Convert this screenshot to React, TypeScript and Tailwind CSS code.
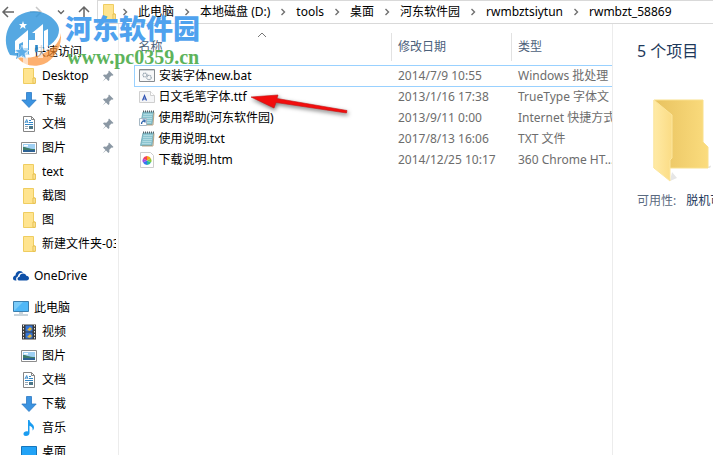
import { ReactNode } from "react";

type IconProps = { className?: string };

function FolderIcon({ className = "" }: IconProps) {
  return (
    <svg viewBox="0 0 14 16" className={"h-4 w-3.5 shrink-0 " + className} aria-hidden="true">
      <path d="M1.500.5h10v9.500h1.500v5.500h-11.500z" fill="#ffe48f" stroke="#efcd60" />
      <path d="M11 10h2.300v5.300H11z" fill="#ffe9a3" stroke="#e6bf4d" />
    </svg>
  );
}

function DownloadIcon() {
  return (
    <svg viewBox="0 0 16 16" className="size-4 shrink-0" aria-hidden="true">
      <path d="M5.500.5h5v7.500h4.700L8 15.500.8 8h4.700z" fill="#3b93e0" stroke="#2c78c4" strokeWidth=".8" />
    </svg>
  );
}

function DocumentIcon() {
  return (
    <svg viewBox="0 0 16 16" className="size-4 shrink-0" aria-hidden="true">
      <path d="M2.500.5h8l3 3v12h-11z" fill="#fff" stroke="#858585" />
      <path d="M10.500.5v3h3" fill="none" stroke="#858585" />
      <path d="M8 4.500h2M8 6.500h4M4 8.500h8" stroke="#3186c6" />
      <path d="M4 10.500h3M4 12.500h3" stroke="#9aa7b2" />
      <path d="M8 10h4v3H8z" fill="#4b7586" />
      <path d="M4 7l1.700-3.500L7 7M4.500 6h2" fill="none" stroke="#3186c6" strokeWidth=".9" />
    </svg>
  );
}

function PictureIcon() {
  return (
    <svg viewBox="0 0 16 12" className="h-3 w-4 shrink-0" aria-hidden="true">
      <path d="M.5.5h15v11H.5z" fill="#fff" stroke="#8d8d8d" />
      <path d="M2 2h12v5H2z" fill="#9fd0f3" />
      <path d="M2 5c4 0 5 2 12 2v2H2z" fill="#3f7d6a" />
      <path d="M2 8h12v2H2z" fill="#2d6294" />
      <path d="M3 3h4v1.500H3z" fill="#fff" />
    </svg>
  );
}

function VideoIcon() {
  return (
    <svg viewBox="0 0 14 16" className="h-4 w-3.5 shrink-0" aria-hidden="true">
      <path d="M0 .5h14v15H0z" fill="#3a3a3a" />
      <path d="M1.500 1v14M12.500 1v14" stroke="#e8e8e8" strokeDasharray="1.500 1.500" />
      <path d="M3.500 1.500h7v6h-7zM3.500 8.500h7v6h-7z" fill="#3374d6" />
      <path d="M5 6l3-3 2 2-2 2zM5 13l3-3 2 2-2 2z" fill="#e0b33d" />
    </svg>
  );
}

function MusicIcon() {
  return (
    <svg viewBox="0 0 16 16" className="size-4 shrink-0" aria-hidden="true">
      <path d="M7 0h1.500c.5 3.500 4.500 4 4.500 7.500 0 1.500-.8 2.500-1.500 3 .6-2.500-.7-4-3-4.700V13c0 1.800-1.700 3-3.500 3S2.500 15 2.500 13.700C2.500 12 4.800 10.800 7 11.500z" fill="#1a9cf0" />
    </svg>
  );
}

function PcIcon() {
  return (
    <svg viewBox="0 0 16 16" className="size-4 shrink-0" aria-hidden="true">
      <path d="M.5 1.500h15v10H.5z" fill="#4fb7f7" stroke="#3c7fae" />
      <path d="M1 11l9-9H1z" fill="#7accfa" />
      <path d="M6 13h4M1 15h14" stroke="#92a9b8" />
    </svg>
  );
}

function DesktopIcon() {
  return (
    <svg viewBox="0 0 16 16" className="size-4 shrink-0" aria-hidden="true">
      <path d="M.5 2.500h15v11H.5z" fill="#22a3f7" stroke="#1476bd" />
    </svg>
  );
}

function CloudIcon() {
  return (
    <svg viewBox="0 0 16 16" className="size-4 shrink-0" aria-hidden="true">
      <path d="M0 10.500c0-1.700 1-2.700 2.500-3C2.600 4.500 4.500 3 6.700 3c1.600 0 2.800.8 3.500 2-3-.6-5 1-5.300 3.500-1.600.4-2.300 2.300-1.400 4H2.300C1 12.500 0 11.800 0 10.500z" fill="#0e50a8" />
      <path d="M4.500 11c0-1.400 1-2.200 2.100-2.300.2-4 5.700-4.300 6.700-.9 1.600 0 2.700 1 2.700 2.500 0 1.300-1 2.200-2.300 2.200H6.500c-1.200 0-2-.6-2-1.500z" fill="#0e50a8" />
    </svg>
  );
}

function StarIcon() {
  return (
    <svg viewBox="0 0 16 16" className="size-4 shrink-0" aria-hidden="true">
      <path d="M9 1l1.500 4.500 5 .3-4 3.400L13 15l-4.500-3L3 15l1.500-5.200L1 6.500l5-.7z" fill="#3f95dc" />
    </svg>
  );
}

function PinIcon() {
  return (
    <svg viewBox="0 0 12 12" className="size-3 shrink-0" aria-hidden="true">
      <path d="M7 .5L11.500 5l-1.200.7-.8-.2L7.300 7.700l.1 2.300-1 1L4 8.500.5 11.500 3.500 8 1 5.600l1-1 2.300.1L6.500 2.500l-.2-.8z" fill="#8b98a4" />
    </svg>
  );
}

function BatIcon() {
  return (
    <svg viewBox="0 0 16 16" className="size-4 shrink-0" aria-hidden="true">
      <path d="M.5 1.500h15v12H.5z" fill="#f7f8f9" stroke="#868b90" />
      <path d="M1 2h14v1H1z" fill="#cdd2d6" />
      <circle cx="6" cy="7" r="2" fill="none" stroke="#93a1ad" strokeDasharray="1.200 .5" strokeWidth="1.200" />
      <circle cx="10" cy="9.500" r="2.200" fill="none" stroke="#93a1ad" strokeDasharray="1.200 .5" strokeWidth="1.200" />
    </svg>
  );
}

function FontIcon() {
  return (
    <svg viewBox="0 0 16 16" className="size-4 shrink-0" aria-hidden="true">
      <path d="M.5 2.500h11l4 4v7H.5z" fill="#f4f5f7" stroke="#cfcfcf" />
      <path d="M11.500 2.500v4h4" fill="#fff" stroke="#cfcfcf" />
      <path d="M3.500 11.500l2-5 2 5M4.500 10h2" fill="none" stroke="#3255b4" strokeWidth="1.200" />
    </svg>
  );
}

function NotepadIcon({ shortcut = false }: { shortcut?: boolean }) {
  return (
    <svg viewBox="0 0 16 16" className="size-4 shrink-0" aria-hidden="true">
      <path d="M4 2h10.500l-1.500 12.500H1.500z" fill="#8cc5d0" stroke="#6aa5b2" strokeWidth=".8" />
      <path d="M15 2.500L14 15H3" fill="none" stroke="#a9906a" strokeWidth=".8" />
      <path d="M4.500 4.500h9M4 6.500h9M4 8.500h9M3.500 10.500h9M3 12.500h9" stroke="#b9dfe6" strokeWidth=".8" />
      <path d="M4 1.500h11" stroke="#56646b" strokeWidth="1.800" strokeDasharray="1 1" />
      {shortcut && (
        <>
          <path d="M.5 8.500h7v7h-7z" fill="#fff" stroke="#a7b8c4" />
          <path d="M2.500 14c0-2 .8-3 3-3M3.500 10H6v2.500" fill="none" stroke="#245ca8" strokeWidth="1.200" />
        </>
      )}
    </svg>
  );
}

function HtmIcon() {
  return (
    <svg viewBox="0 0 16 16" className="size-4 shrink-0" aria-hidden="true">
      <path d="M1.500.5h10l3 3v12h-13z" fill="#fff" stroke="#cdcdcd" />
      <path d="M8 8.500V4a4.500 4.500 0 0 1 4 2.500z" fill="#f9a31b" />
      <path d="M8 8.500l4-2a4.500 4.500 0 0 1 0 4z" fill="#8acb3b" />
      <path d="M8 8.500l4 2A4.500 4.500 0 0 1 8 13z" fill="#25b8a5" />
      <path d="M8 8.500V13a4.500 4.500 0 0 1-4-2.500z" fill="#3577ef" />
      <path d="M8 8.500l-4 2a4.500 4.500 0 0 1 0-4z" fill="#a44be0" />
      <path d="M8 8.500l-4-2A4.500 4.500 0 0 1 8 4z" fill="#f2405c" />
    </svg>
  );
}

function Chevron() {
  return (
    <svg viewBox="0 0 6 8" className="mx-2.5 h-2 w-1.5 shrink-0" aria-hidden="true">
      <path d="M1.500 1l3 3-3 3" fill="none" stroke="#707070" strokeWidth="1.400" />
    </svg>
  );
}

const crumbs = ["此电脑", "本地磁盘 (D:)", "tools", "桌面", "河东软件园", "rwmbztsiytun", "rwmbzt_58869"];

const quickLinks: { label: string; icon: ReactNode; pinned?: boolean }[] = [
  { label: "Desktop", icon: <FolderIcon />, pinned: true },
  { label: "下载", icon: <DownloadIcon />, pinned: true },
  { label: "文档", icon: <DocumentIcon />, pinned: true },
  { label: "图片", icon: <PictureIcon />, pinned: true },
  { label: "text", icon: <FolderIcon /> },
  { label: "截图", icon: <FolderIcon /> },
  { label: "图", icon: <FolderIcon /> },
  { label: "新建文件夹-03", icon: <FolderIcon /> },
];

const pcLinks: { label: string; icon: ReactNode }[] = [
  { label: "视频", icon: <VideoIcon /> },
  { label: "图片", icon: <PictureIcon /> },
  { label: "文档", icon: <DocumentIcon /> },
  { label: "下载", icon: <DownloadIcon /> },
  { label: "音乐", icon: <MusicIcon /> },
  { label: "桌面", icon: <DesktopIcon /> },
];

const files: { name: string; date: string; type: string; icon: ReactNode }[] = [
  { name: "安装字体new.bat", date: "2014/7/9 10:55", type: "Windows 批处理", icon: <BatIcon /> },
  { name: "日文毛笔字体.ttf", date: "2013/1/16 17:38", type: "TrueType 字体文", icon: <FontIcon /> },
  { name: "使用帮助(河东软件园)", date: "2013/9/11 0:00", type: "Internet 快捷方式", icon: <NotepadIcon shortcut /> },
  { name: "使用说明.txt", date: "2017/8/13 16:06", type: "TXT 文件", icon: <NotepadIcon /> },
  { name: "下载说明.htm", date: "2014/12/25 10:17", type: "360 Chrome HT...", icon: <HtmIcon /> },
];

function TreeItem({ label, icon, pinned = false, root = false }: { label: string; icon: ReactNode; pinned?: boolean; root?: boolean }) {
  return (
    <li>
      <a href="#" className={"flex h-6 items-center gap-1 overflow-hidden pr-0.5 whitespace-nowrap " + (root ? "pl-3" : "pl-5")}>
        <span className="flex w-[18px] shrink-0 justify-center">{icon}</span>
        <span className="flex-1 overflow-hidden">{label}</span>
        {pinned && <span className="pr-0.5"><PinIcon /></span>}
      </a>
    </li>
  );
}

function Toolbar() {
  return (
    <header className="flex h-6 items-stretch">
      <div className="flex w-[97px] shrink-0 items-center justify-between pr-1.5 text-[#666]">
        <button aria-label="后退">
          <svg viewBox="0 0 16 14" className="h-3.5 w-4"><path d="M8 2L3 7l5 5M3 7h11" fill="none" stroke="currentColor" strokeWidth="1.500" /></svg>
        </button>
        <button aria-label="前进" className="text-[#c8c8c8]">
          <svg viewBox="0 0 16 14" className="h-3.5 w-4"><path d="M8 2l5 5-5 5M13 7H2" fill="none" stroke="currentColor" strokeWidth="1.500" /></svg>
        </button>
        <button aria-label="最近位置">
          <svg viewBox="0 0 8 6" className="h-1.5 w-2"><path d="M1 1.500l3 3 3-3" fill="none" stroke="currentColor" strokeWidth="1.400" /></svg>
        </button>
        <button aria-label="向上">
          <svg viewBox="0 0 14 14" className="size-3.5"><path d="M2 7l5-5 5 5M7 2v11" fill="none" stroke="currentColor" strokeWidth="1.500" /></svg>
        </button>
      </div>
      <nav aria-label="地址" className="flex min-w-0 flex-1 items-center overflow-hidden border-y border-l border-[#d9d9d9] pl-1">
        <FolderIcon />
        <ol className="-ml-1 flex items-center whitespace-nowrap">
          {crumbs.map((c) => (
            <li key={c} className="flex items-center">
              <Chevron />
              <a href="#">{c}</a>
            </li>
          ))}
        </ol>
      </nav>
    </header>
  );
}

function Sidebar() {
  return (
    <nav aria-label="导航" className="w-[119px] shrink-0 overflow-hidden border-r border-[#ececec] pt-4">
      <ul>
        <TreeItem root label="快速访问" icon={<StarIcon />} />
        {quickLinks.map((l) => <TreeItem key={l.label} {...l} />)}
      </ul>
      <ul className="mt-2">
        <TreeItem root label="OneDrive" icon={<CloudIcon />} />
      </ul>
      <ul className="mt-2">
        <TreeItem root label="此电脑" icon={<PcIcon />} />
        {pcLinks.map((l) => <TreeItem key={l.label} {...l} />)}
      </ul>
    </nav>
  );
}

function FileTable() {
  return (
    <main className="relative min-w-0 flex-1 overflow-hidden pl-[15px]">
      <table className="w-full table-fixed border-collapse whitespace-nowrap text-left">
        <colgroup>
          <col />
          <col className="w-[120px]" />
          <col className="w-[100px]" />
        </colgroup>
        <thead>
          <tr className="h-[41px] text-[#4c607a]">
            <th className="p-0 pb-1 align-bottom font-normal">
              <button className="flex h-7 w-full items-center border-r border-[#e2e2e2] pl-1">名称</button>
            </th>
            <th className="p-0 pb-1 align-bottom font-normal">
              <button className="flex h-7 w-full items-center border-r border-[#e2e2e2] pl-1.5">修改日期</button>
            </th>
            <th className="p-0 pb-1 align-bottom font-normal">
              <button className="flex h-7 w-full items-center pl-1.5">类型</button>
            </th>
          </tr>
        </thead>
        <tbody>
          {files.map((f, i) => (
            <tr key={f.name} className={"h-[21px] " + (i === 0 ? "border-y border-l border-[#99d1ff]" : "")}>
              <td className="p-0">
                <div className="flex items-center gap-1 pl-1">
                  {f.icon}
                  <a href="#">{f.name}</a>
                </div>
              </td>
              <td className="p-0 pl-1.5 text-[#6d6d6d]">{f.date}</td>
              <td className="overflow-hidden p-0 pl-1.5 text-[#6d6d6d]">{f.type}</td>
            </tr>
          ))}
        </tbody>
      </table>
      <svg viewBox="0 0 10 6" className="absolute top-2 left-[138px] h-1.5 w-2.5" aria-hidden="true">
        <path d="M1 5l4-4 4 4" fill="none" stroke="#777" />
      </svg>
      <svg viewBox="0 0 104 28" className="absolute top-[66px] left-[130px] h-7 w-[104px] drop-shadow-[1px_2px_2px_#0008]" aria-hidden="true">
        <path d="M2 7l27-2-1 3.500 70 12-.5 2.500L27 12.500l-2 5.500z" fill="#f20d0d" stroke="#c41414" strokeWidth=".6" />
      </svg>
    </main>
  );
}

function Details() {
  return (
    <aside className="w-[101px] shrink-0 overflow-hidden border-l border-[#ececec] pl-6 whitespace-nowrap">
      <h2 className="mt-[15px] text-base leading-6 text-[#1e395b]">5 个项目</h2>
      <svg viewBox="0 0 58 86" className="mt-9 ml-4 h-[86px] w-[58px]" aria-hidden="true">
        <defs>
          <linearGradient id="back"><stop offset="0" stopColor="#e8c25f" /><stop offset="1" stopColor="#fbdc7e" /></linearGradient>
          <linearGradient id="front"><stop offset="0" stopColor="#ffeaa5" /><stop offset="1" stopColor="#fbdc85" /></linearGradient>
        </defs>
        <path d="M17 82l7-3-5-6zM51 69h6l2-3z" fill="#e6e6e6" />
        <path d="M1 1h49v42l5 5v21H1z" fill="url(#back)" stroke="#f9e08d" />
        <path d="M1 1l18 15v43l-2 2v21L1 69z" fill="url(#front)" stroke="#fce69d" />
      </svg>
      <dl className="mt-2 flex gap-2.5">
        <dt className="text-[#5a6a80]">可用性:</dt>
        <dd className="text-[#1e395b]">脱机可用</dd>
      </dl>
    </aside>
  );
}

function Watermark() {
  return (
    <div className="pointer-events-none absolute top-[11px] left-[5px] flex">
      <svg viewBox="0 0 56 56" className="size-14 opacity-80" aria-hidden="true">
        <path d="M5 44C-3 31 1 14 13 5c12-8 29-6 38 6 2 3 3 5 3 8 0 9-8 16-20 21-9 4-20 6-29 4z" fill="#2b93db" />
        <path d="M56 22c1 13-6 26-17 31-11 4-21 1-27-7 10 2 21 0 29-5 9-5 14-11 15-19z" fill="#fb8c2c" fillOpacity=".85" />
        <path d="M10 30l13-11v18h-5v-6l-4 2v9h-4zM24 29h6v-7h-3l11-9v27h-5V34h-3v9h-6z" fill="#fff" />
        <path d="M18 37h5v19h-5zM33 40h5v7h-5z" fill="#fff" fillOpacity=".6" />
        <path d="M39 20l4-2v20l-4 2z" fill="#fff" />
        <path d="M17 34l2 5 5 .5-4 3 1 5-4-3-4.500 3 1.500-5-4-3.500 5-.5z" fill="#65b3ec" stroke="#fff" strokeWidth=".6" />
        <path d="M18 10l1 3h3l-2 2 .5 3-2.500-2-3 2 1-3-2-2h3z" fill="#fff" />
      </svg>
      <div className="pt-0.5 pl-1">
        <p className="text-[27px] leading-8 font-black text-[#4fa2ee]">河东软件园</p>
        <p className="pl-0.5 font-['Liberation_Serif',serif] text-xl leading-6 font-bold text-[#5db35b]">www.pc0359.cn</p>
      </div>
    </div>
  );
}

export default function App() {
  return (
    <div className="relative flex h-screen flex-col overflow-hidden bg-white font-['Noto_Sans','Noto_Sans_CJK_SC',sans-serif] text-xs text-black">
      <Toolbar />
      <div className="flex min-h-0 flex-1">
        <Sidebar />
        <FileTable />
        <Details />
      </div>
      <Watermark />
    </div>
  );
}
